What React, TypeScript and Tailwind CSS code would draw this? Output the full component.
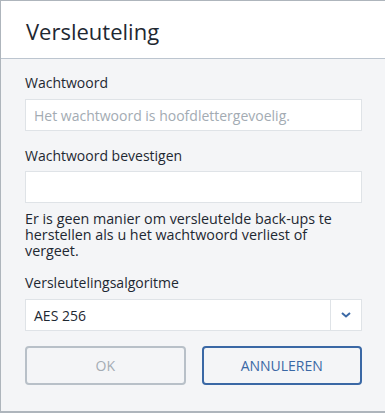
import React from "react";

export default function App() {
  const font = { fontFamily: '"Open Sans", "Noto Sans", sans-serif' };
  return (
    <div
      className="w-[385px] h-[413px] bg-[#f4f5f7] border-l border-t border-b-2 border-[#aeb5bc] flex flex-col overflow-hidden"
      style={font}
    >
      <div className="h-[58px] bg-white border-b border-[#bcc5cf] pl-[25px] pt-[15px] shrink-0">
        <h1 className="text-[22px] leading-[30px] text-[#1e2832] font-normal">Versleuteling</h1>
      </div>
      <div className="flex flex-col pl-[24px] pr-[23px] pt-[14px] text-[14px] text-[#1e2832]">
        <label className="leading-[20px]">Wachtwoord</label>
        <div className="mt-[6px] h-[32px] bg-white border border-[#dfe3e7] px-[8px] flex items-center">
          <span className="text-[#a3abb3]">Het wachtwoord is hoofdlettergevoelig.</span>
        </div>
        <label className="mt-[15px] leading-[20px]">Wachtwoord bevestigen</label>
        <div className="mt-[5px] h-[32px] bg-white border border-[#dfe3e7]" />
        <p className="mt-[8px] leading-[16px] pr-[10px] text-[14.3px]">
          Er is geen manier om versleutelde back-ups te herstellen als u het wachtwoord verliest of vergeet.
        </p>
        <label className="mt-[14px] leading-[20px]">Versleutelingsalgoritme</label>
        <div className="mt-[6px] h-[32px] bg-white border border-[#dfe3e7] flex items-stretch">
          <div className="flex-1 flex items-center px-[8px]">AES 256</div>
          <div className="w-[31px] border-l border-[#dfe3e7] flex items-center justify-center">
            <svg width="10" height="6" viewBox="0 0 10 6">
              <path d="M1 1 L5 4.5 L9 1" fill="none" stroke="#3b69a6" strokeWidth="2" />
            </svg>
          </div>
        </div>
        <div className="mt-[15px] flex gap-[16px]">
          <button className="flex-1 h-[39px] border-2 border-[#b8c0c8] rounded-[4px] text-[#a4acb4] uppercase">
            OK
          </button>
          <button className="flex-1 h-[39px] border-2 border-[#3a68a5] rounded-[4px] text-[#3a68a5] uppercase">
            Annuleren
          </button>
        </div>
      </div>
    </div>
  );
}
